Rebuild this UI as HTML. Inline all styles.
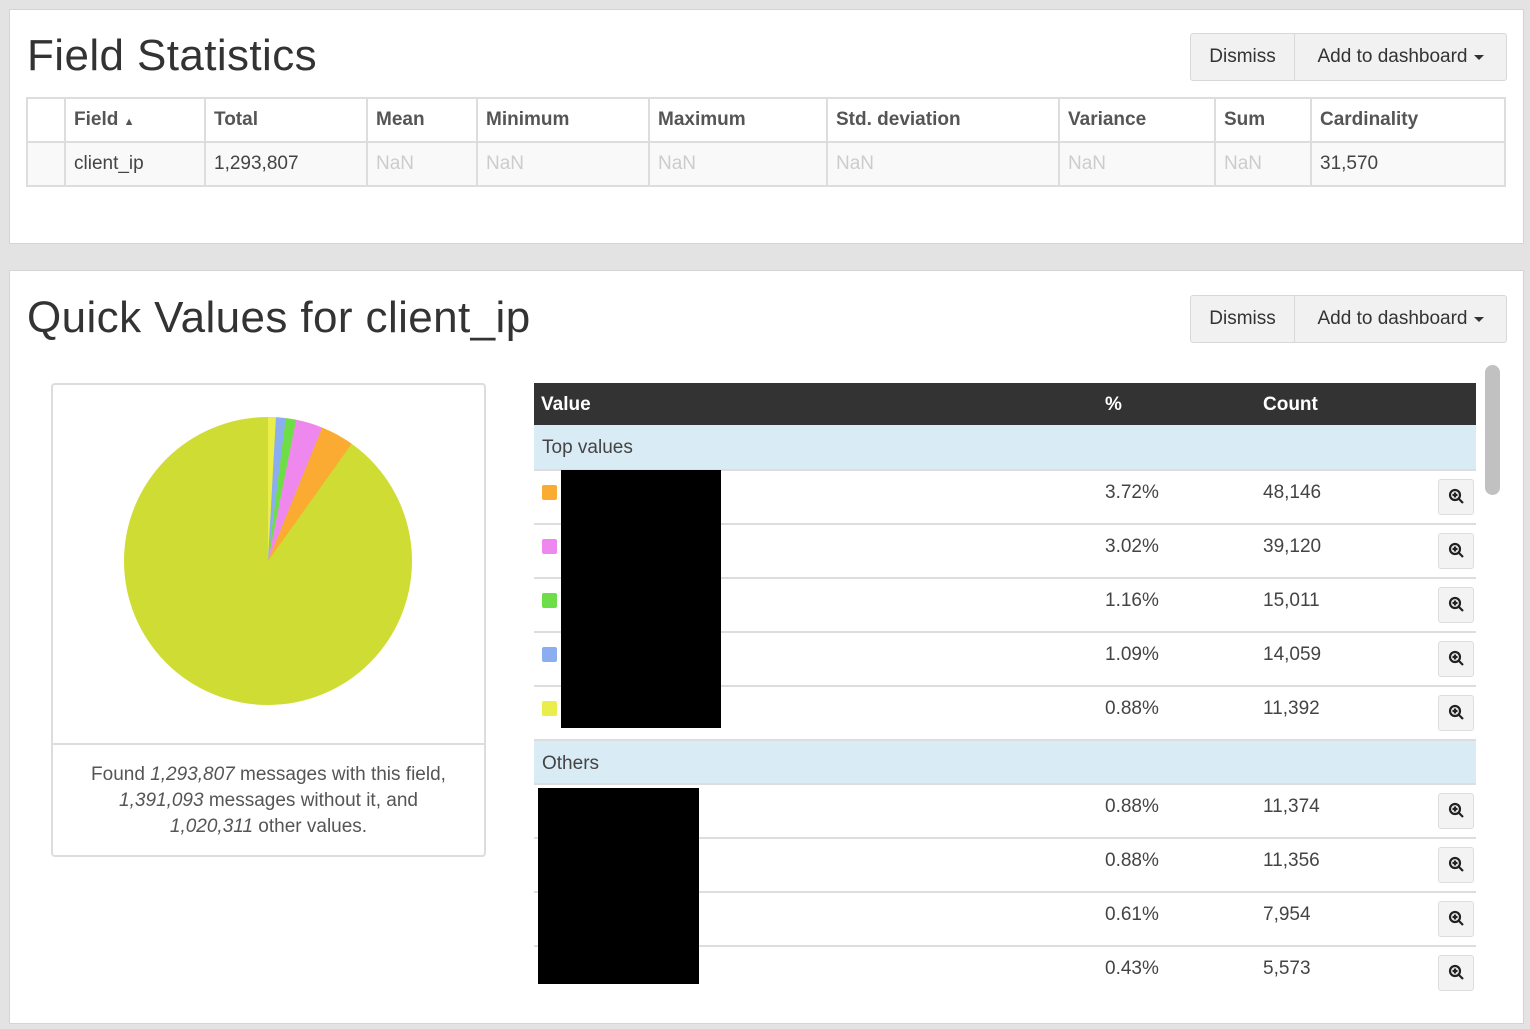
<!DOCTYPE html>
<html><head><style>
*{box-sizing:border-box;margin:0;padding:0}
body{width:1530px;height:1029px;background:#e3e3e3;font-family:"Liberation Sans",sans-serif;color:#333;position:relative;overflow:hidden}
.p{position:absolute;background:#fff;border:1px solid #d4d4d4}
.a{position:absolute}
h1{position:absolute;font-weight:normal;font-size:44px;color:#333;letter-spacing:0.4px}
.bg{position:absolute;height:48px;border:1px solid #d8d8d8;border-radius:3px;background:#f1f1f1;display:flex;font-size:19px;color:#333}
.bg div{display:flex;align-items:center;justify-content:center}
.bg div:first-child{width:103px}
.bg div+div{border-left:1px solid #d8d8d8;width:212px}
.car{display:inline-block;width:0;height:0;border-left:5px solid transparent;border-right:5px solid transparent;border-top:5px solid #333;margin-left:6px}
table.st{position:absolute;left:26px;top:97px;width:1480px;border-collapse:collapse;font-size:19px}
table.st td{border:2px solid #ddd;padding:0 8px;height:44px}
table.st tr:first-child td{font-weight:bold;color:#555}
table.st tr:last-child td{background:#f9f9f9;color:#444}
.n{color:#ccc!important}
.row{position:absolute;left:534px;width:942px;height:54px;border-top:2px solid #ddd;font-size:19px;color:#444}
.row span{position:absolute;top:11px}
.sq{position:absolute;left:8px;top:14px;width:15px;height:15px;border-radius:2px}
.zb{position:absolute;left:904px;top:8px;width:36px;height:36px;border:1px solid #ddd;border-radius:3px;background:#f3f3f3}
.sec{position:absolute;left:534px;width:942px;height:45px;background:#d9ebf5;font-size:19px;color:#444;padding:12px 0 0 8px}
</style></head><body>
<div class="p" style="left:9px;top:9px;width:1515px;height:235px"></div>
<h1 style="left:27px;top:31px">Field Statistics</h1>
<div class="bg" style="left:1190px;top:33px"><div>Dismiss</div><div>Add to dashboard<span class="car"></span></div></div>
<table class="st">
<tr><td style="width:38px"></td><td style="width:140px">Field <span style="font-size:11px">▲</span></td><td style="width:162px">Total</td><td style="width:110px">Mean</td><td style="width:172px">Minimum</td><td style="width:178px">Maximum</td><td style="width:232px">Std. deviation</td><td style="width:156px">Variance</td><td style="width:96px">Sum</td><td>Cardinality</td></tr>
<tr><td></td><td>client_ip</td><td>1,293,807</td><td class="n">NaN</td><td class="n">NaN</td><td class="n">NaN</td><td class="n">NaN</td><td class="n">NaN</td><td class="n">NaN</td><td>31,570</td></tr>
</table>

<div class="p" style="left:9px;top:270px;width:1515px;height:754px"></div>
<h1 style="left:27px;top:293px">Quick Values for client_ip</h1>
<div class="bg" style="left:1190px;top:295px"><div>Dismiss</div><div>Add to dashboard<span class="car"></span></div></div>

<div class="a" style="left:51px;top:383px;width:435px;height:474px;border:2px solid #ddd;border-radius:4px"></div>
<div class="a" style="left:51px;top:743px;width:435px;height:2px;background:#ddd"></div>
<svg class="a" style="left:0;top:0" width="520" height="740">
<circle cx="268" cy="561" r="144" fill="#cfdc34"/>
<path d="M268 561 L268 417 A144 144 0 0 1 275.96 417.22Z" fill="#e9ee4a"/>
<path d="M268 561 L275.96 417.22 A144 144 0 0 1 285.77 418.10Z" fill="#8aaef0"/>
<path d="M268 561 L285.77 418.10 A144 144 0 0 1 296.14 419.78Z" fill="#6ddd48"/>
<path d="M268 561 L296.14 419.78 A144 144 0 0 1 322.27 427.62Z" fill="#ee88ee"/>
<path d="M268 561 L322.27 427.62 A144 144 0 0 1 351.68 443.81Z" fill="#fbaa32"/>
</svg>
<div class="a" style="left:53px;top:762px;width:431px;text-align:center;font-size:19px;line-height:26px;color:#555;white-space:nowrap">Found <i>1,293,807</i> messages with this field,<br><i>1,391,093</i> messages without it, and<br><i>1,020,311</i> other values.</div>

<div class="a" style="left:534px;top:383px;width:942px;height:42px;background:#333;color:#fff;font-size:19px;font-weight:bold">
<span class="a" style="left:7px;top:11px">Value</span><span class="a" style="left:571px;top:11px">%</span><span class="a" style="left:729px;top:11px">Count</span></div>
<div class="sec" style="top:425px">Top values</div>
<div class="row" style="top:469px"><div class="sq" style="background:#fbaa32"></div><span style="left:571px">3.72%</span><span style="left:729px">48,146</span><div class="zb"></div></div>
<div class="row" style="top:523px"><div class="sq" style="background:#ee88ee"></div><span style="left:571px">3.02%</span><span style="left:729px">39,120</span><div class="zb"></div></div>
<div class="row" style="top:577px"><div class="sq" style="background:#6ddd48"></div><span style="left:571px">1.16%</span><span style="left:729px">15,011</span><div class="zb"></div></div>
<div class="row" style="top:631px"><div class="sq" style="background:#8aaef0"></div><span style="left:571px">1.09%</span><span style="left:729px">14,059</span><div class="zb"></div></div>
<div class="row" style="top:685px"><div class="sq" style="background:#e9ee4a"></div><span style="left:571px">0.88%</span><span style="left:729px">11,392</span><div class="zb"></div></div>
<div class="sec" style="top:739px;border-top:2px solid #ddd">Others</div>
<div class="row" style="top:783px"><span style="left:571px">0.88%</span><span style="left:729px">11,374</span><div class="zb"></div></div>
<div class="row" style="top:837px"><span style="left:571px">0.88%</span><span style="left:729px">11,356</span><div class="zb"></div></div>
<div class="row" style="top:891px"><span style="left:571px">0.61%</span><span style="left:729px">7,954</span><div class="zb"></div></div>
<div class="row" style="top:945px;height:52px"><span style="left:571px">0.43%</span><span style="left:729px">5,573</span><div class="zb"></div></div>
<div class="a" style="left:561px;top:470px;width:160px;height:258px;background:#000"></div>
<div class="a" style="left:538px;top:788px;width:161px;height:196px;background:#000"></div>
<div class="a" style="left:1477px;top:359px;width:28px;height:640px;background:#fff"></div>
<div class="a" style="left:1485px;top:365px;width:15px;height:130px;background:#c1c1c1;border-radius:8px"></div>
<svg class="a" style="left:0;top:0;pointer-events:none" width="1530" height="1029">
<g fill="none" stroke="#222" stroke-width="2.2">
<g transform="translate(1456,496)"><circle cx="-1" cy="-1" r="5"/><path d="M3 3 L7 7 M-1 -3.5 V1.5 M-3.5 -1 H1.5"/></g>
<g transform="translate(1456,550)"><circle cx="-1" cy="-1" r="5"/><path d="M3 3 L7 7 M-1 -3.5 V1.5 M-3.5 -1 H1.5"/></g>
<g transform="translate(1456,604)"><circle cx="-1" cy="-1" r="5"/><path d="M3 3 L7 7 M-1 -3.5 V1.5 M-3.5 -1 H1.5"/></g>
<g transform="translate(1456,658)"><circle cx="-1" cy="-1" r="5"/><path d="M3 3 L7 7 M-1 -3.5 V1.5 M-3.5 -1 H1.5"/></g>
<g transform="translate(1456,712)"><circle cx="-1" cy="-1" r="5"/><path d="M3 3 L7 7 M-1 -3.5 V1.5 M-3.5 -1 H1.5"/></g>
<g transform="translate(1456,810)"><circle cx="-1" cy="-1" r="5"/><path d="M3 3 L7 7 M-1 -3.5 V1.5 M-3.5 -1 H1.5"/></g>
<g transform="translate(1456,864)"><circle cx="-1" cy="-1" r="5"/><path d="M3 3 L7 7 M-1 -3.5 V1.5 M-3.5 -1 H1.5"/></g>
<g transform="translate(1456,918)"><circle cx="-1" cy="-1" r="5"/><path d="M3 3 L7 7 M-1 -3.5 V1.5 M-3.5 -1 H1.5"/></g>
<g transform="translate(1456,972)"><circle cx="-1" cy="-1" r="5"/><path d="M3 3 L7 7 M-1 -3.5 V1.5 M-3.5 -1 H1.5"/></g>
</g></svg>
</body></html>
